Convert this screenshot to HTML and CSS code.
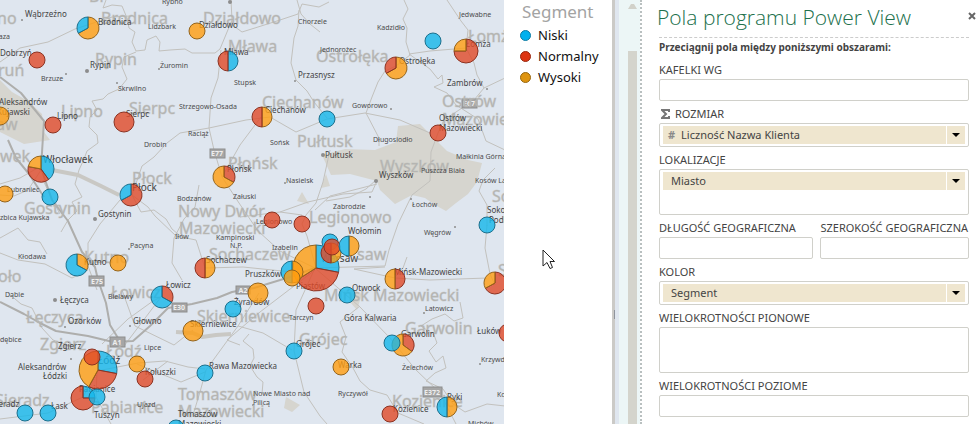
FILE: index.html
```html
<!DOCTYPE html>
<html lang="pl">
<head>
<meta charset="utf-8">
<title>Power View</title>
<link rel="stylesheet" href="styles.css">
</head>
<body>
<main class="report">
  <svg class="map" role="img" aria-label="Mapa klientów">
    <g class="land">
      <path d="M0 80L12 92L28 101L42 114L44 132L50 140L24 144L0 132Z"/>
      <path d="M322 155L345 149L375 150L396 142L398 126L420 124L432 136L447 151L468 160L482 163L477 182L468 194L456 203L446 211L435 205L425 198L412 195L395 204L380 190L377 181L350 174L331 175Z"/>
      <path d="M302 192L309 204L297 201ZM326 174L330 186L321 188ZM350 288L362 294L357 310L350 302ZM286 397L300 405L292 412L284 408Z"/>
    </g>
    <g class="road minor">
      <path d="M0 62L20 48L48 42L75 29L112 17L130 16"/>
      <path d="M106 0L103 8L112 5L122 6L127 18L129 28L135 32L132 42L136 51L145 50L147 40L156 36L160 42L159 51L170 50L185 49L192 53L215 53L220 49L232 20L231 0M136 52L124 57L122 67L127 79L119 89L108 94L103 99L92 101L97 110L90 117L89 127L97 135L98 143L87 151L84 159L79 170L75 184L82 197L72 202L77 211L68 220L61 232"/>
      <path d="M231 24L242 32L258 27L280 20L298 14L302 4L319 7L329 2M299 10L298 26L294 38L291 63L296 80L307 91L314 102L327 118M297 0L301 14L310 24L320 32"/>
      <path d="M221 50L218 78L211 98L209 128L180 133L167 143L154 157L142 166L132 195L120 200L100 224L88 243L88 266L97 290"/>
      <path d="M209 128L246 120L270 117L296 132L327 119L365 113L400 120L430 133M209 128L214 150L222 177L239 203L258 231L280 251L315 268M222 177L240 145L261 117"/>
      <path d="M404 0L408 9L403 19L407 28L406 42L410 55L396 66L385 71L378 82L372 97L366 113L379 138L379 146M409 54L430 51L466 48L474 63L477 75L484 88L505 78M447 0L461 21L468 30L466 49M409 54L430 69L438 79L442 75L443 83L434 87L447 93L456 105L478 119L486 141L505 150"/>
      <path d="M484 88L474 100L444 120L438 133L431 152L430 181L412 195L398 224L389 250L385 266L315 268M385 267L354 269L395 278L430 280L487 278M487 225L485 248L490 274L495 285M495 168L483 180L479 191L487 205L487 226"/>
      <path d="M132 195L148 207L155 216L176 236L196 240L205 268L243 267L292 272M122 290L135 326L174 345L193 330M124 346L161 297M168 361L143 380M88 270L72 278L45 264L18 260L0 253"/>
      <path d="M302 224L307 236L316 268M302 215L280 212L240 217M280 212L308 202L343 194L372 192L377 181M315 268L296 310L294 351L304 392L320 416L327 424M315 270L260 312L227 340M315 268L360 307L390 338L415 369L440 393L456 424"/>
      <path d="M259 293L238 326L206 370L200 392L193 415M238 326L263 333L292 350M205 369L188 367L165 361L138 363L97 371M97 371L83 397L48 413L0 419M97 371L96 397L111 424M137 364L181 382L205 372M360 306L340 322L346 337L342 352L353 368L360 381L370 390L387 395L398 413L424 424"/>
      <path d="M330 150L323 182L316 203L306 215L302 224M315 210L330 196L377 184M376 180L366 189L350 197L326 201M394 278L403 268L407 257M460 302L463 318L454 321L445 314L432 319L421 326L434 335L437 343L429 351L436 362L443 356L446 368L435 373L426 381L443 389L453 404L465 412L487 404L505 406"/>
      <path d="M132 195L141 212L154 210L166 219L172 229L184 239M0 238L18 228L28 240L40 242L47 254M41 166L20 178L0 184M43 180L51 197L60 214M8 293L21 304L32 308L42 328L53 340L76 348M161 297L153 301L128 319L102 344M182 280L172 263L174 238L184 219L195 207L199 185"/>
      <path d="M249 334L243 341L253 349L254 358L250 366L257 377L263 382L262 394M227 340L232 342L240 345M0 195L14 196L28 190L41 170"/>
    </g>
    <g class="road river">
      <path d="M52 170L78 175L101 186L119 195M176 332L193 333L202 337L216 335L231 334"/>
    </g>
    <g class="road major">
      <path d="M0 77L21 93L44 121L41 168L52 200L68 221L82 252L95 267L98 280L106 303L110 325L118 338"/>
      <path d="M8 140L16 158L29 174L44 197M0 302L24 314L40 323L56 331L88 336L113 342L133 341L150 326L168 308L192 304L217 298L232 292L254 288L290 277L315 268"/>
    </g>
    <g class="dots">
      <circle cx="87" cy="71" r="2"/><circle cx="95" cy="219" r="2"/><circle cx="230" cy="2" r="2"/><circle cx="376" cy="181" r="2"/><circle cx="323" cy="155" r="2"/><circle cx="55" cy="300" r="2"/><circle cx="22" cy="20" r="1"/><circle cx="66" cy="74" r="1"/><circle cx="117" cy="83" r="1"/><circle cx="159" cy="69" r="1"/><circle cx="295" cy="81" r="1"/><circle cx="391" cy="109" r="1"/><circle cx="487" cy="89" r="1"/><circle cx="411" cy="199" r="1"/><circle cx="455" cy="227" r="1"/><circle cx="285" cy="183" r="1"/><circle cx="129" cy="249" r="1"/><circle cx="65" cy="327" r="1"/><circle cx="130" cy="326" r="1"/><circle cx="71" cy="359" r="1"/><circle cx="253" cy="405" r="1"/><circle cx="424" cy="313" r="1"/><circle cx="480" cy="364" r="1"/><circle cx="370" cy="197" r="1"/>
    </g>
    <g class="shields">
      <rect x="210" y="149" width="15" height="9"/><rect x="462" y="99" width="15" height="9"/><rect x="89" y="276" width="15" height="10"/><rect x="110" y="337" width="15" height="10"/><rect x="172" y="303" width="15" height="9"/><rect x="236" y="286" width="14" height="8"/><rect x="423" y="387" width="19" height="10"/>
      <text x="217" y="156">E77</text><text x="469" y="106">E67</text><text x="97" y="284">E75</text><text x="117" y="345">A1</text><text x="179" y="310">E30</text><text x="243" y="293">A2</text><text x="432" y="395">E372</text>
    </g>
    <g class="region">
      <text x="89" y="2">Br</text><text x="-3" y="24">no</text><text x="101" y="24">Brodnica</text><text x="203" y="24">Działdowo</text><text x="228" y="52">Mława</text><text x="95" y="65">Rypin</text><text x="-2" y="76">ruń</text><text x="316" y="62">Ostrołęka</text><text x="468" y="42">Łomża</text><text x="61" y="117">Lipno</text><text x="129" y="114">Sierpc</text><text x="262" y="108">Ciechanów</text><text x="442" y="107">Ostrów</text><text x="442" y="125">Mazowiecka</text><text x="297" y="147">Pułtusk</text><text x="-4" y="130">aw</text><text x="0" y="162">wek</text><text x="132" y="184">Płock</text><text x="228" y="169">Płońsk</text><text x="380" y="172">Wyszków</text><text x="24" y="214">Gostynin</text><text x="178" y="217">Nowy Dwór</text><text x="179" y="234">Mazowiecki</text><text x="309" y="223">Legionowo</text><text x="492" y="202">Sokołów</text><text x="209" y="260">Sochaczew</text><text x="357" y="260">saw</text><text x="84" y="263">Kutno</text><text x="-2" y="282">oło</text><text x="111" y="298">Łowicz</text><text x="324" y="301">Mińsk Mazowiecki</text><text x="498" y="276">Siedlce</text><text x="26" y="323">Łęczyca</text><text x="197" y="322">Skierniewice</text><text x="40" y="350">Zgierz</text><text x="106" y="357">Łódź</text><text x="299" y="345">Grójec</text><text x="405" y="334">Garwolin</text><text x="-5" y="406">Sieradz</text><text x="91" y="413">Pabianice</text><text x="178" y="400">Tomaszów</text><text x="178" y="417">Mazowiecki</text><text x="392" y="407">Kozienice</text>
    </g>
    <g class="town">
      <text x="25" y="17">Wąbrzeźno</text><text x="98" y="25">Brodnica</text><text x="0" y="56">Dobrzyń</text><text x="90" y="68">Rypin</text><text x="199" y="28">Działdowo</text><text x="224" y="55">Mława</text><text x="298" y="78">Przasnysz</text><text x="399" y="64">Ostrołęka</text><text x="466" y="47">Łomża</text><text x="447" y="86">Zambrów</text><text x="-1" y="105">Aleksandrów</text><text x="-3" y="115">Kujawski</text><text x="57" y="119">Lipno</text><text x="126" y="117">Sierpc</text><text x="265" y="113">Ciechanów</text><text x="439" y="121">Ostrów</text><text x="439" y="131">Mazowiecki</text><text x="325" y="158">Pułtusk</text><text x="227" y="172">Płońsk</text><text x="379" y="178">Wyszków</text><text x="98" y="217">Gostynin</text><text x="348" y="234">Wołomin</text><text x="487" y="213">Sokołów</text><text x="489" y="223">Podlaski</text><text x="206" y="263">Sochaczew</text><text x="245" y="277">Pruszków</text><text x="84" y="265">Kutno</text><text x="394" y="275">Mińsk-Mazowiecki</text><text x="352" y="291">Otwock</text><text x="344" y="321">Góra Kalwaria</text><text x="60" y="303">Łęczyca</text><text x="68" y="324">Ozorków</text><text x="133" y="324">Głowno</text><text x="58" y="349">Zgierz</text><text x="18" y="370">Aleksandrów</text><text x="43" y="379">Łódzki</text><text x="234" y="305">Żyrardów</text><text x="190" y="327">Skierniewice</text><text x="296" y="347">Grójec</text><text x="209" y="369">Rawa Mazowiecka</text><text x="401" y="337">Garwolin</text><text x="477" y="334">Łuków</text><text x="145" y="375">Koluszki</text><text x="79" y="392">Pabianice</text><text x="94" y="418">Tuszyn</text><text x="-8" y="407">Sieradz</text><text x="51" y="409">Łask</text><text x="178" y="417">Tomaszów</text><text x="178" y="427">Mazowiecki</text><text x="338" y="368">Warka</text><text x="393" y="412">Kozienice</text><text x="447" y="400">Ryki</text><text x="166" y="288">Łowicz</text><text x="296" y="289">Piastów</text>
    </g>
    <g class="village">
      <text x="162" y="4">Rybno</text><text x="148" y="29">Lidzbark</text><text x="298" y="24">Chorzele</text><text x="459" y="17">Jedwabne</text><text x="377" y="30">Kadzidło</text><text x="320" y="52">Jednorożec</text><text x="-3" y="39">łaza</text><text x="41" y="81">Brzuze</text><text x="160" y="68">Żuromin</text><text x="118" y="91">Skrwilno</text><text x="234" y="85">Stupsk</text><text x="179" y="109">Strzegowo-Osada</text><text x="352" y="108">Goworowo</text><text x="188" y="136">Raciąż</text><text x="270" y="145">Sońsk</text><text x="373" y="142">Długosiodło</text><text x="144" y="147">Drobin</text><text x="456" y="159">Małkinia Górna</text><text x="421" y="173">Puszcza Biała</text><text x="475" y="183">Kosów Lacki</text><text x="7" y="192">Lubraniec</text><text x="0" y="220">zbica Kujawska</text><text x="286" y="183">Nasielsk</text><text x="177" y="201">Bodzanów</text><text x="233" y="199">Załuski</text><text x="333" y="209">Zabrodzie</text><text x="412" y="207">Łochów</text><text x="424" y="235">Węgrów</text><text x="130" y="248">Pacyna</text><text x="18" y="259">Kłodawa</text><text x="175" y="239">Iłów</text><text x="216" y="240">Kampinoski</text><text x="230" y="248">N.P.</text><text x="272" y="250">Izabelin</text><text x="256" y="224">Legionowo</text><text x="5" y="297">Dąbie</text><text x="108" y="299">Bielawy</text><text x="0" y="342">dębice</text><text x="144" y="350">Lipce</text><text x="289" y="320">Tarczyn</text><text x="425" y="311">Latowicz</text><text x="481" y="362">Krzywda</text><text x="402" y="370">Żelechów</text><text x="137" y="407">Ujazd</text><text x="253" y="396">Nowe Miasto nad</text><text x="253" y="405">Pilicą</text><text x="338" y="396">Ryczywół</text><text x="468" y="426">Michów</text><text x="497" y="397">Kock</text>
    </g>
    <g class="city">
      <text x="43" y="163">Włocławek</text><text x="132" y="191">Płock</text><text x="321" y="262">Warsaw</text><text x="98" y="364">Łódź</text>
    </g>
    <g id="pies" class="pies"></g>
  </svg>

  <aside class="legend">
    <h2>Segment</h2>
    <ul>
      <li><span class="swatch low"></span>Niski</li>
      <li><span class="swatch normal"></span>Normalny</li>
      <li><span class="swatch high"></span>Wysoki</li>
    </ul>
    <svg class="pointer" width="14" height="21" viewBox="0 0 14 21" aria-hidden="true"><path d="M1 1V17L5 13.500L8 19.500L10.500 18.500L8 12.500H12.500Z"/></svg>
  </aside>
</main>

<div class="splitter"><span class="grip"></span></div>
<div class="scroll"><svg width="9" height="5" viewBox="0 0 9 5" aria-hidden="true"><path d="M0 5L3 0H6L9 5Z"/></svg><span class="thumb"></span></div>

<section class="pane">
  <header class="pane-head">
    <h1>Pola programu Power View</h1>
    <button class="close" type="button" aria-label="Zamknij"><svg width="8" height="8" viewBox="0 0 8 8"><path d="M1 1L7 7M7 1L1 7"/></svg></button>
  </header>
  <form class="fields">
    <p class="hint">Przeciągnij pola między poniższymi obszarami:</p>
    <label for="tiles">KAFELKI WG</label>
    <input id="tiles" class="well" type="text">

    <label for="size" class="with-icon"><svg width="9" height="10" viewBox="0 0 9 10" aria-hidden="true"><path d="M8 3V1H1L5 5L1 9H8V7"/></svg>ROZMIAR</label>
    <div class="well"><div class="pill"><span class="hash">#</span><select id="size" class="numeric"><option>Liczność Nazwa Klienta</option></select><svg width="8" height="4" viewBox="0 0 8 4" aria-hidden="true"><path d="M0 0H8L4 4Z"/></svg></div></div>

    <label for="place">LOKALIZACJE</label>
    <div class="well tall"><div class="pill"><select id="place"><option>Miasto</option></select><svg width="8" height="4" viewBox="0 0 8 4" aria-hidden="true"><path d="M0 0H8L4 4Z"/></svg></div></div>

    <div class="pair">
      <div><label for="lon">DŁUGOŚĆ GEOGRAFICZNA</label><input id="lon" class="well" type="text"></div>
      <div><label for="lat">SZEROKOŚĆ GEOGRAFICZNA</label><input id="lat" class="well" type="text"></div>
    </div>

    <label for="color">KOLOR</label>
    <div class="well"><div class="pill"><select id="color"><option>Segment</option></select><svg width="8" height="4" viewBox="0 0 8 4" aria-hidden="true"><path d="M0 0H8L4 4Z"/></svg></div></div>

    <label for="vertical">WIELOKROTNOŚCI PIONOWE</label>
    <textarea id="vertical" class="well tall"></textarea>

    <label for="horizontal">WIELOKROTNOŚCI POZIOME</label>
    <input id="horizontal" class="well" type="text">
  </form>
</section>
<script src="pies.js"></script>
</body>
</html>
```

FILE: styles.css
```css
* { box-sizing: border-box; }

body {
  margin: 0;
  display: flex;
  height: 100vh;
  overflow: hidden;
  background: #fff;
  color: #444;
  font-family: "Noto Sans", "Open Sans", sans-serif;
}

.report { display: flex; flex: 1; min-width: 0; }

/* Map */
.map { flex: 1; min-width: 0; height: 100%; background: #dfe6ef; }
.map text { font-family: "Noto Sans", sans-serif; }
.land { fill: #d6d5cf; }
.road { fill: none; stroke: #c2c1bd; stroke-linejoin: round; }
.minor { stroke-width: 1; }
.river { stroke: #c9c8c4; stroke-width: 4; }
.major { stroke: #aeaeac; stroke-width: 2; }
.dots { fill: #8d8d8d; }
.shields rect { fill: #a6a6a6; stroke: #8e8e8e; }
.shields text { font-size: 7px; font-weight: 700; fill: #eee; text-anchor: middle; }
.region { font-size: 16px; fill: #b5b5b2; stroke: #b5b5b2; stroke-width: 1; stroke-opacity: .4; }
.town { font-size: 8px; fill: #444; }
.village { font-size: 7px; fill: #4c4c4c; }
.city { font-size: 10px; fill: #444; }
.pies { stroke-width: 1; stroke-linejoin: round; }
.pie-low { fill: #14b7ea; fill-opacity: .8; stroke: #1d6f8c; }
.pie-normal { fill: #e04a28; fill-opacity: .8; stroke: #8c3322; }
.pie-high { fill: #ff9e10; fill-opacity: .8; stroke: #94641c; }

/* Legend */
.legend { position: relative; width: 108px; padding-left: 16px; }
.legend h2 { margin: 0 0 1px 2px; font-size: 17px; line-height: 24px; font-weight: 400; color: #a3a3a3; }
.legend ul { margin: 0; padding: 0; list-style: none; }
.legend li { display: flex; align-items: center; gap: 7px; font-size: 13px; line-height: 21px; color: #111; }
.swatch { width: 11px; height: 11px; border: 1px solid; border-radius: 50%; }
.low { background: #00b0ee; border-color: #0c7ba3; }
.normal { background: #dd3512; border-color: #98270f; }
.high { background: #de9410; border-color: #97660d; }
.pointer { position: absolute; left: 38px; top: 249px; fill: #fff; stroke: #222; }

/* Divider and scroll bar */
.splitter { display: flex; align-items: center; width: 7px; padding-top: 204px; background: #dfe6ef; border-left: 3px solid #cbcac7; }
.grip { width: 1px; height: 9px; margin-left: -1px; background: #8f949c; }
.scroll { display: flex; flex-direction: column; align-items: center; width: 21px; padding: 4px 0 0 5px; background: #ecf6f6; fill: #d1d1c9; }
.thumb { flex: 1; width: 9px; margin-top: 42px; background: #d4d4cc; }

/* Field list pane */
.pane { width: 340px; padding: 0 11px 0 17px; border-left: 2px dotted #b9c0c0; }
.pane-head { display: flex; align-items: flex-start; justify-content: space-between; height: 37px; margin: 0 -7px 0 -2px; }
.pane-head h1 { margin: 0; font-family: "Open Sans", sans-serif; font-size: 21px; line-height: 34px; font-weight: 300; color: #21704c; white-space: nowrap; }
.close { display: flex; margin-top: 12px; padding: 0; border: 0; background: none; }
.close path { fill: none; stroke: #666; stroke-width: 2; }
.fields { border-top: 1px dashed #ccc; }
.hint { margin: 0; font-size: 10px; line-height: 19px; font-weight: 700; white-space: nowrap; }
label { display: block; padding-top: 4px; font-size: 11px; line-height: 18px; white-space: nowrap; }
.with-icon { display: flex; align-items: center; gap: 5px; padding-left: 2px; }
.with-icon path { fill: none; stroke: #777; stroke-width: 2; }
.well { display: block; width: 100%; height: 22px; padding: 2px 3px; border: 1px solid #d0d0ca; border-radius: 2px; background: #fff; resize: none; }
div.well { height: 24px; }
.well.tall { height: 46px; }
.pill { display: flex; align-items: center; height: 18px; padding-right: 5px; background: #efe6cf; }
.pill select { appearance: none; flex: 1; align-self: stretch; min-width: 0; margin-right: 5px; padding: 0 0 0 8px; border: 0; border-right: 1px solid #fff; border-radius: 0; background: none; color: #444; font: 11px/18px "Noto Sans", sans-serif; }
.pill select.numeric { padding-left: 6px; }
.hash { padding-left: 5px; font-size: 11px; line-height: 18px; font-weight: 700; color: #8a8a8a; }
.pair { display: grid; grid-template-columns: 26fr 25fr; gap: 7px; }
.pair > div { min-width: 0; }
```

FILE: pies.js
```js
// x, y, radius, then slices clockwise from the top: [segment, share]
const L = "low", N = "normal", H = "high";
const pies = [
  [88, 28, 11, [H, .67], [L, .33]], [37, 60, 8], [0, 116, 9, [H, 1]], [53, 125, 8], [124, 122, 10],
  [197, 31, 8, [H, 1]], [228, 61, 10, [L, .5], [N, .5]], [262, 117, 10, [H, .5], [N, .5]],
  [327, 119, 8, [L, 1]], [433, 41, 8, [L, 1]], [466, 51, 12, [N, .75], [H, .25]],
  [396, 68, 11, [H, .67], [N, .33]], [438, 133, 8],
  [41, 169, 13, [L, .4], [N, .38], [H, .22]], [5, 194, 8, [H, 1]], [50, 197, 8, [L, 1]],
  [131, 195, 11, [N, .67], [L, .33]], [77, 265, 11, [H, .33], [L, .67]], [118, 263, 8, [H, 1]],
  [224, 177, 11, [N, .33], [H, .67]], [272, 220, 8], [302, 224, 8], [205, 268, 10, [H, .5], [N, .5]],
  [316, 268, 23, [L, .28], [N, .38], [H, .34]], [292, 272, 11, [H, .5], [L, .5]], [292, 278, 8, [H, 1]],
  [330, 242, 8, [L, 1]], [331, 253, 10, [H, .5], [N, .5]], [332, 247, 8],
  [349, 246, 10, [H, .5], [L, .5]], [487, 225, 8, [L, 1]], [395, 279, 10, [N, .5], [H, .5]],
  [495, 283, 11, [N, .67], [H, .33]], [347, 295, 8, [L, 1]], [162, 297, 11, [N, .33], [L, .67]],
  [258, 293, 10, [H, 1]], [233, 309, 8, [L, 1]], [316, 306, 8], [193, 331, 10, [H, 1]],
  [294, 351, 8, [L, 1]], [205, 373, 8, [L, 1]], [341, 367, 8, [H, 1]],
  [403, 345, 11, [N, .35], [H, .65]], [392, 343, 8, [L, 1]], [508, 333, 9],
  [447, 407, 10, [H, .5], [L, .5]], [390, 414, 8],
  [98, 370, 19, [L, .28], [N, .3], [H, .42]], [92, 357, 8], [137, 364, 8, [H, 1]], [145, 379, 8],
  [83, 398, 12, [L, .25], [N, .75]], [97, 397, 8, [L, 1]], [25, 413, 8, [L, 1]], [48, 413, 8, [L, 1]],
  [176, 428, 8, [L, 1]]
];

const ns = "http://www.w3.org/2000/svg";
const layer = document.getElementById("pies");

function add(tag, segment, attrs) {
  const node = document.createElementNS(ns, tag);
  node.setAttribute("class", "pie-" + segment);
  for (const key in attrs) node.setAttribute(key, attrs[key]);
  layer.append(node);
}

for (const [x, y, r, ...slices] of pies) {
  if (slices.length < 2) {
    add("circle", slices.length ? slices[0][0] : N, { cx: x, cy: y, r });
    continue;
  }
  let start = 0;
  for (const [segment, share] of slices) {
    const point = t => (x + r * Math.sin(t * 2 * Math.PI)) + " " + (y - r * Math.cos(t * 2 * Math.PI));
    const end = start + share;
    add("path", segment, { d: `M${x} ${y}L${point(start)}A${r} ${r} 0 ${share > .5 ? 1 : 0} 1 ${point(end)}Z` });
    start = end;
  }
}
```
